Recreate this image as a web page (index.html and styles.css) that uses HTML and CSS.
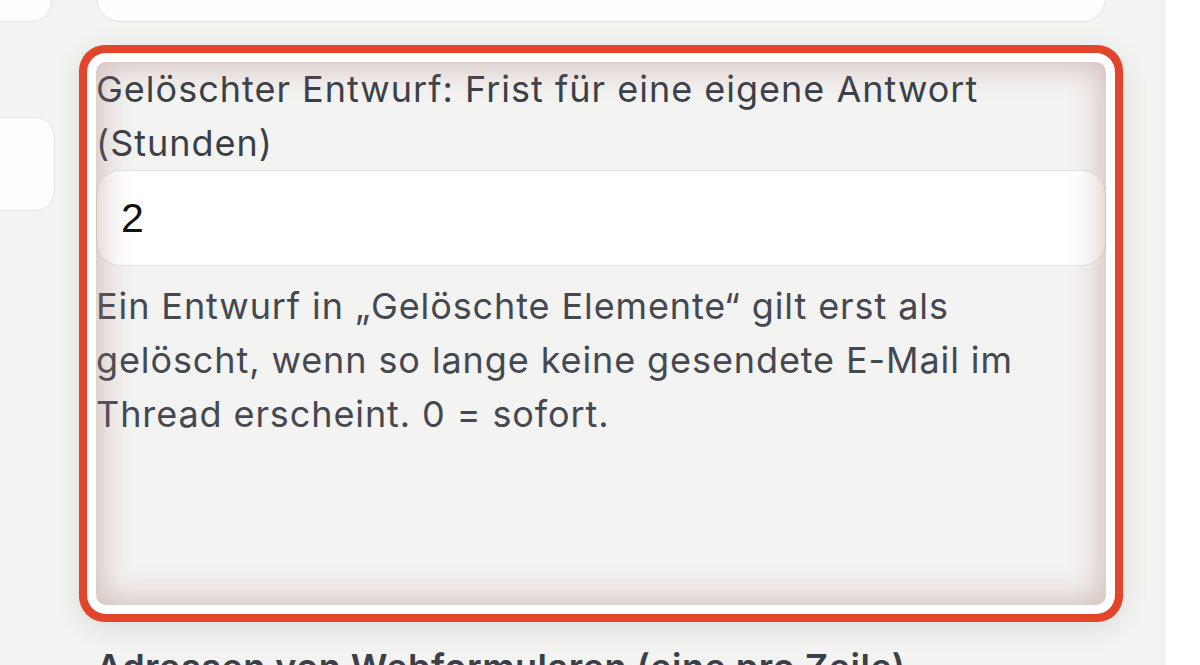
FILE: index.html
```html
<!DOCTYPE html>
<html lang="de">
<head>
<meta charset="utf-8">
<title>Einstellungen</title>
<link rel="stylesheet" href="styles.css">
</head>
<body>
<div class="page">
  <aside class="side">
    <div class="side-box side-box-top"></div>
    <div class="side-box side-box-mid"></div>
  </aside>
  <main class="main">
    <div class="prev-input"></div>
    <div class="field field-highlight">
      <label class="field-label" for="frist">Gelöschter Entwurf: Frist für eine eigene Antwort (Stunden)</label>
      <input id="frist" class="field-input" type="text" value="2">
      <p class="field-help">Ein Entwurf in „Gelöschte Elemente“ gilt erst als gelöscht, wenn so lange keine gesendete E-Mail im Thread erscheint. 0 = sofort.</p>
    </div>
    <div class="field">
      <label class="field-label next-label">Adressen von Webformularen (eine pro Zeile)</label>
    </div>
  </main>
  <div class="right-strip"></div>
</div>
</body>
</html>
```

FILE: styles.css
```css
html, body {
  margin: 0;
  padding: 0;
}
body {
  width: 1200px;
  height: 665px;
  overflow: hidden;
  background: #f3f3f1;
  font-family: Inter, "Noto Sans", sans-serif;
}
.page {
  display: flex;
  height: 665px;
}
.side {
  width: 55px;
  flex: none;
  display: flex;
  flex-direction: column;
}
.side-box {
  flex: none;
  background: #fdfdfc;
  border: 1px solid #e4e4e2;
  border-radius: 20px;
  margin-left: -30px;
  box-sizing: border-box;
}
.side-box-top {
  height: 60px;
  margin-top: -38px;
  width: 82px;
}
.side-box-mid {
  margin-top: 95px;
  height: 94px;
  width: 85px;
}
.main {
  width: 1010px;
  margin-left: 41px;
  flex: none;
  display: flex;
  flex-direction: column;
}
.prev-input {
  flex: none;
  height: 70px;
  margin-top: -48px;
  background: #fefefe;
  border: 1px solid #e3e3e1;
  border-radius: 24px;
  box-sizing: border-box;
}
.field {
  flex: none;
  display: flex;
  flex-direction: column;
}
.field-highlight {
  position: relative;
  margin-top: 40px;
  height: 543px;
  box-sizing: border-box;
  border-radius: 10px;
  background: #f3f3f1;
  box-shadow: 0 0 0 9px #ffffff, 0 0 0 17px #e1452b, 0 6px 28px 16px rgba(0, 0, 0, 0.10);
}
.field-highlight::after {
  content: "";
  position: absolute;
  inset: 0;
  border-radius: 10px;
  pointer-events: none;
  box-shadow: inset 0 0 30px 6px rgba(170, 125, 120, 0.42);
}
.field-label {
  font-size: 36px;
  line-height: 54px;
  color: #3b3f48;
  letter-spacing: 1px;
}
.field-input {
  flex: none;
  margin: 0;
  height: 96px;
  box-sizing: border-box;
  background: #ffffff;
  border: 1px solid #e2e2e0;
  border-radius: 24px;
  padding: 0 24px;
  font-family: "Liberation Sans", Arial, sans-serif;
  font-size: 41px;
  color: #111111;
  outline: none;
}
.field-help {
  margin: 13px 0 0;
  font-size: 36px;
  line-height: 54px;
  color: #454851;
  letter-spacing: 0.9px;
}
.next-label {
  margin-top: 35px;
  font-weight: 600;
  letter-spacing: 0.5px;
}
.right-strip {
  margin-left: 60px;
  flex: 1;
  background: #ffffff;
}
```
